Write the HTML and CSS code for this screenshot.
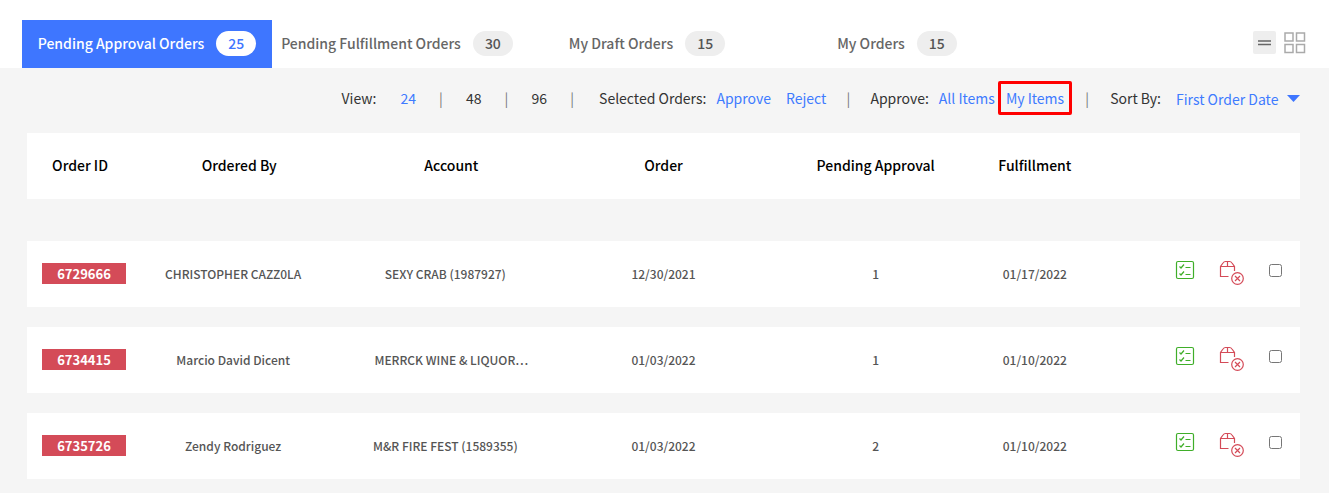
FILE: index.html
```html
<!DOCTYPE html>
<html lang="en">
<head>
<meta charset="utf-8">
<meta name="viewport" content="width=device-width, initial-scale=1">
<title>Orders</title>
<link rel="stylesheet" href="styles.css">
</head>
<body>
<svg class="sprite" aria-hidden="true">
  <symbol id="icon-review" viewBox="0 0 20 20">
    <rect x="1.5" y="1.5" width="17" height="17" rx="1.5"/>
    <path d="M4.500 6.500l1.500 1.500 3-3.500M4.500 13.500l1.500 1.500 3-3.500M10.500 7.500h5M10.500 14.500h5"/>
  </symbol>
  <symbol id="icon-reject" viewBox="0 0 26 26">
    <path d="M9.500 16.500H1.500V6.500L4 3Q5 1.500 6.500 1.500H10.500Q12 1.500 13 3L15.500 6.500V11M1.500 6.500H15.500M8.500 1.500V6.500"/>
    <circle cx="18.500" cy="18.500" r="5.800"/>
    <path d="M16 16l5 5M21 16l-5 5"/>
  </symbol>
</svg>
<header class="topbar">
  <nav class="tabs" aria-label="Order lists">
    <a class="tab tab-active" href="#pending-approval">Pending Approval Orders <span class="count">25</span></a>
    <a class="tab" href="#pending-fulfillment">Pending Fulfillment Orders <span class="count">30</span></a>
    <a class="tab" href="#drafts">My Draft Orders <span class="count">15</span></a>
    <a class="tab" href="#orders">My Orders <span class="count">15</span></a>
  </nav>
  <div class="layouts">
    <button class="layout layout-active" type="button" aria-label="List view">
      <svg width="23" height="23" viewBox="0 0 23 23"><path d="M5 10h13M5 13.500h13" stroke="#666" stroke-width="1.600"/></svg>
    </button>
    <button class="layout" type="button" aria-label="Grid view">
      <svg width="23" height="23" viewBox="0 0 23 23" fill="none" stroke="#aaa" stroke-width="1.500"><rect x="2" y="2" width="8" height="8"/><rect x="13.500" y="2" width="8" height="8"/><rect x="2" y="13.500" width="8" height="8"/><rect x="13.500" y="13.500" width="8" height="8"/></svg>
    </button>
  </div>
</header>
<main>
  <div class="toolbar">
    <span>View:</span>
    <a href="#24">24</a>
    <span class="bar">|</span>
    <a class="plain" href="#48">48</a>
    <span class="bar">|</span>
    <a class="plain" href="#96">96</a>
    <span class="bar">|</span>
    <div class="group">
      <span>Selected Orders:</span>
      <a href="#approve">Approve</a>
      <a class="reject" href="#reject">Reject</a>
    </div>
    <span class="bar">|</span>
    <div class="group group-near">
      <span>Approve:</span>
      <a href="#all-items">All Items</a>
      <a class="boxed" href="#my-items">My Items</a>
    </div>
    <span class="bar bar-near">|</span>
    <div class="sort">
      <label for="sort">Sort By:</label>
      <span class="picker">
        <select id="sort"><option>First Order Date</option></select>
        <svg width="13" height="7" viewBox="0 0 13 7" aria-hidden="true"><path d="M0 0h13L6.500 7z" fill="#3e76ff"/></svg>
      </span>
    </div>
  </div>
  <table class="orders">
    <thead>
      <tr><th>Order ID</th><th>Ordered By</th><th>Account</th><th>Order</th><th>Pending Approval</th><th>Fulfillment</th><td></td></tr>
    </thead>
    <tbody>
      <tr>
        <td class="id"><a href="#6729666">6729666</a></td><td class="name">CHRISTOPHER CAZZ0LA</td><td class="name">SEXY CRAB (1987927)</td><td>12/30/2021</td><td>1</td><td>01/17/2022</td>
        <td class="actions">
          <button class="review" type="button" aria-label="Review order"><svg width="20" height="20"><use href="#icon-review"/></svg></button>
          <button class="cancel" type="button" aria-label="Reject order"><svg width="26" height="26"><use href="#icon-reject"/></svg></button>
          <input type="checkbox" aria-label="Select order 6729666">
        </td>
      </tr>
      <tr>
        <td class="id"><a href="#6734415">6734415</a></td><td class="name">Marcio David Dicent</td><td>MERRCK WINE &amp; LIQUOR…</td><td>01/03/2022</td><td>1</td><td>01/10/2022</td>
        <td class="actions">
          <button class="review" type="button" aria-label="Review order"><svg width="20" height="20"><use href="#icon-review"/></svg></button>
          <button class="cancel" type="button" aria-label="Reject order"><svg width="26" height="26"><use href="#icon-reject"/></svg></button>
          <input type="checkbox" aria-label="Select order 6734415">
        </td>
      </tr>
      <tr>
        <td class="id"><a href="#6735726">6735726</a></td><td class="name">Zendy Rodriguez</td><td class="name">M&amp;R FIRE FEST (1589355)</td><td>01/03/2022</td><td>2</td><td>01/10/2022</td>
        <td class="actions">
          <button class="review" type="button" aria-label="Review order"><svg width="20" height="20"><use href="#icon-review"/></svg></button>
          <button class="cancel" type="button" aria-label="Reject order"><svg width="26" height="26"><use href="#icon-reject"/></svg></button>
          <input type="checkbox" aria-label="Select order 6735726">
        </td>
      </tr>
    </tbody>
  </table>
</main>
</body>
</html>
```
FILE: styles.css
```css
* { box-sizing: border-box; }
body {
  margin: 0;
  background: #f5f5f5;
  color: #333;
  font-family: "Noto Sans CJK SC", "Noto Sans", sans-serif;
  font-size: 14px;
  line-height: 20px;
}
a { color: #3e7bff; text-decoration: none; }
button { padding: 0; border: 0; background: none; cursor: pointer; }
svg { display: block; }
.sprite { position: absolute; width: 0; height: 0; }

.topbar {
  display: flex;
  justify-content: space-between;
  padding: 20px 23px 0 22px;
  background: #fff;
}
.tabs { display: flex; }
.tab {
  display: flex;
  align-items: center;
  justify-content: center;
  gap: 12px;
  width: 250px;
  height: 48px;
  padding-bottom: 2px;
  color: #666;
  font-weight: 500;
  white-space: nowrap;
}
.count {
  width: 40px;
  border-radius: 13px;
  background: #eee;
  color: #555;
  line-height: 25px;
  text-align: center;
}
.tab-active { background: #3e76ff; color: #fff; }
.tab-active .count { background: #fff; color: #3e76ff; }
.layouts { display: flex; align-items: center; gap: 7px; padding-bottom: 4px; }
.layout-active { border-radius: 2px; background: #eee; }

.toolbar {
  display: flex;
  align-items: center;
  justify-content: flex-end;
  gap: 24px;
  height: 65px;
  padding: 0 29px 6px;
  white-space: nowrap;
}
.plain { color: #333; }
.bar { width: 2px; display: flex; justify-content: center; color: #777; }
.bar-near { margin-left: -10px; }
.group { display: flex; align-items: center; gap: 8px; margin-left: 2px; }
.group span { margin-right: 2px; }
.group-near { margin-left: -3px; }
.reject { margin-left: 7px; margin-right: -3px; }
.boxed {
  margin-left: -5px;
  padding: 4px 5px;
  border: 3px solid #f00;
  border-radius: 2px;
}
.sort { display: flex; align-items: center; gap: 15px; margin-left: -2px; }
.picker { display: flex; align-items: center; gap: 8px; padding-top: 2px; }
select {
  padding: 0;
  border: 0;
  appearance: none;
  background: none;
  color: #3e7bff;
  font: inherit;
}

.orders { display: flex; flex-direction: column; gap: 42px; margin: 0 29px 14px 27px; }
tbody { display: flex; flex-direction: column; gap: 20px; }
tr {
  display: grid;
  grid-template-columns: 1fr 2fr 2fr 2fr 2fr 1fr 2fr;
  align-items: center;
  min-height: 66px;
  background: #fff;
}
th, td { min-width: 0; padding: 0; text-align: center; white-space: nowrap; }
th { padding-bottom: 2px; color: #000; font-weight: 500; }
td { color: #555; font-size: 12px; font-weight: 500; }
.name { padding-right: 12px; }
.id { padding: 0 7px 2px 15px; }
.id a {
  display: block;
  background: #d44b58;
  color: #fff;
  font-size: 13px;
  font-weight: 700;
  line-height: 21px;
}
.actions { display: flex; align-items: center; justify-content: flex-end; padding: 0 18px 8px 0; }
.actions svg { fill: none; stroke: currentColor; stroke-width: 1.2; }
.review { margin-right: 24px; color: #3fae29; }
.cancel { margin: 6px 24px 0 0; color: #d44b58; }
.actions input { width: 13px; height: 13px; margin: 0; }
```
